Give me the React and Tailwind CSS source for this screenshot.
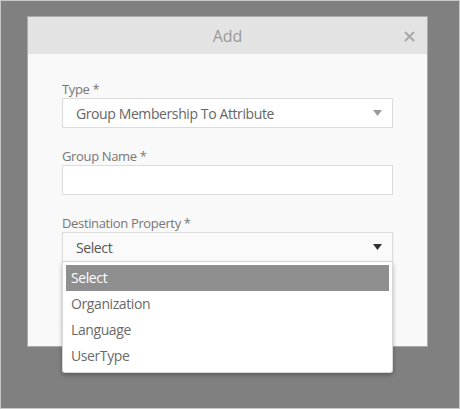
const font = { fontFamily: '"Open Sans", "Noto Sans", sans-serif' }

const options = ['Select', 'Organization', 'Language', 'UserType']

function Caret({ dark }) {
  return (
    <svg width="9" height="6" viewBox="0 0 9 6" className="shrink-0">
      <path d="M0 0h9L4.5 6z" fill={dark ? '#333333' : '#9a9a9a'} />
    </svg>
  )
}

function Field({ label, children }) {
  return (
    <div className="mb-[19px]">
      <div className="h-[18px] leading-[18px] text-[13px] tracking-[-0.35px] text-[#777]">{label}</div>
      {children}
    </div>
  )
}

export default function App() {
  return (
    <div className="w-[460px] h-[409px] bg-[#808080] border border-[#c8c8c8] pl-[26px] pt-[15px]" style={font}>
      <div className="w-[401px] h-[331px] border border-[#a9a9a9] bg-[#f9f9f9] flex flex-col">
        {/* header */}
        <div className="h-[37px] bg-[#e3e3e3] flex items-center justify-center relative">
          <span className="text-[16px] text-[#999]">Add</span>
          <span className="absolute right-[12px] top-[14px]">
            <svg width="11" height="11" viewBox="0 0 11 11">
              <path d="M1 1l9 9M10 1l-9 9" stroke="#a8a8a8" strokeWidth="2" />
            </svg>
          </span>
        </div>

        {/* body */}
        <div className="px-[34px] pt-[26px]">
          <Field label="Type *">
            <div className="h-[30px] bg-white border border-[#dcdcdc] flex items-center justify-between pl-[13px] pr-[10px]">
              <span className="text-[14px] tracking-[-0.4px] text-[#666]">Group Membership To Attribute</span>
              <Caret />
            </div>
          </Field>
          <Field label="Group Name *">
            <div className="h-[30px] bg-white border border-[#dcdcdc]" />
          </Field>
          <Field label="Destination Property *">
            <div className="relative">
              <div className="h-[30px] bg-[#fafafa] border border-[#dcdcdc] shadow-[0_1px_2px_rgba(0,0,0,0.08)] flex items-center justify-between pl-[13px] pr-[10px]">
                <span className="text-[14px] tracking-[-0.4px] text-[#555]">Select</span>
                <Caret dark />
              </div>
              <ul className="absolute left-0 right-0 top-[30px] bg-white border border-[#d8d8d8] border-t-0 rounded-b-[3px] shadow-[0_2px_4px_rgba(0,0,0,0.3)] p-[3px] z-10">
                {options.map((o, i) => (
                  <li
                    key={o}
                    className={`h-[26px] leading-[26px] pl-[5px] text-[14px] tracking-[-0.4px] ${i === 0 ? 'bg-[#8f8f8f] text-white' : 'text-[#6a6a6a]'}`}
                  >
                    {o}
                  </li>
                ))}
              </ul>
            </div>
          </Field>
        </div>
      </div>
    </div>
  )
}
